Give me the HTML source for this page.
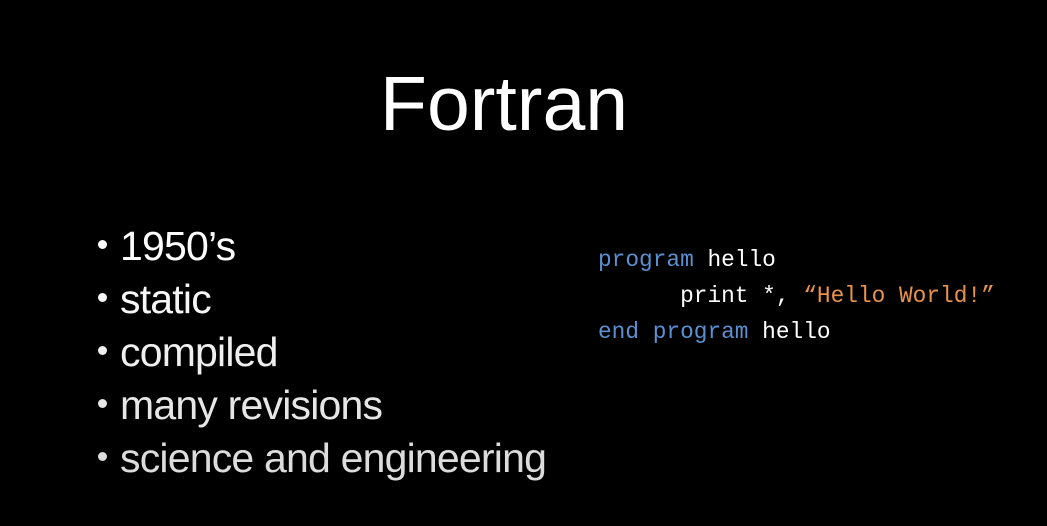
<!DOCTYPE html>
<html><head><meta charset="utf-8"><style>
html,body{margin:0;padding:0;background:#000;width:1047px;height:526px;overflow:hidden;position:relative}
.t{position:absolute;left:0;width:1008px;text-align:center;top:66px;font:77px/1 "Liberation Sans",sans-serif;color:#fff}
.b{position:absolute;left:120px;font:41px/1 "Liberation Sans",sans-serif;letter-spacing:-0.8px;white-space:nowrap}
.d{position:absolute;left:-22px;top:14px;width:9px;height:9px;border-radius:50%;background:currentColor}
.c{position:absolute;left:598px;font:22.8px/1 "Liberation Mono",monospace;white-space:pre;color:#fff}
.k{color:#5b8fd0}.s{color:#e8924c}
</style></head><body>
<div class="t">Fortran</div>
<div class="b" style="top:226px;color:#fff"><span class="d"></span>1950’s</div>
<div class="b" style="top:279px;color:#f6f6f6"><span class="d"></span>static</div>
<div class="b" style="top:332px;color:#efefef"><span class="d"></span>compiled</div>
<div class="b" style="top:385px;color:#e6e6e6"><span class="d"></span>many revisions</div>
<div class="b" style="top:438px;color:#dcdcdc"><span class="d"></span>science and engineering</div>
<div class="c" style="top:249px"><span class="k">program</span> hello</div>
<div class="c" style="top:285px">      print *, <span class="s">“Hello World!”</span></div>
<div class="c" style="top:321px"><span class="k">end program</span> hello</div>
</body></html>
